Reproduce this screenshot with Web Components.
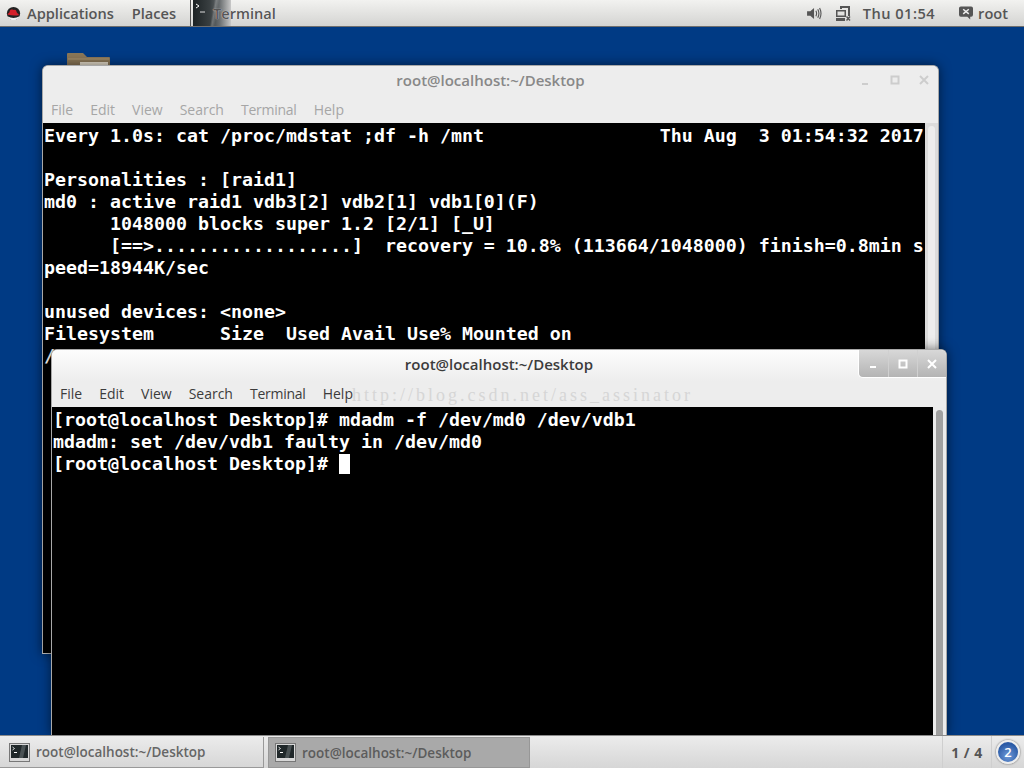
<!DOCTYPE html>
<html>
<head>
<meta charset="utf-8">
<title>Terminal</title>
<style>
html, body { margin: 0; height: 100%; overflow: hidden; }
body { font-family: "Open Sans", sans-serif; }
</style>
</head>
<body>
<gnome-desktop>
  <top-panel slot="top"></top-panel>
  <desktop-folder slot="canvas" style="left:67px;top:26px"></desktop-folder>
  <term-window slot="canvas" inactive wintitle="root@localhost:~/Desktop" style="left:42px;top:38px;width:897px;height:589px;"><pre>Every 1.0s: cat /proc/mdstat ;df -h /mnt                Thu Aug  3 01:54:32 2017

Personalities : [raid1]
md0 : active raid1 vdb3[2] vdb2[1] vdb1[0](F)
      1048000 blocks super 1.2 [2/1] [_U]
      [==&gt;..................]  recovery = 10.8% (113664/1048000) finish=0.8min s
peed=18944K/sec

unused devices: &lt;none&gt;
Filesystem      Size  Used Avail Use% Mounted on
/</pre></term-window>
  <term-window slot="canvas" wintitle="root@localhost:~/Desktop" style="left:51px;top:322px;width:896px;height:386px;"><pre>[root@localhost Desktop]# mdadm -f /dev/md0 /dev/vdb1
mdadm: set /dev/vdb1 faulty in /dev/md0
[root@localhost Desktop]# <b></b></pre></term-window>
  <water-mark slot="canvas"></water-mark>
  <bottom-panel slot="bottom"></bottom-panel>
</gnome-desktop>
<script>
"use strict";
const TERM_ICON = (w, h) => `<svg width="${w}" height="${h}" viewBox="0 0 21 19">
  <rect x="0.5" y="0.5" width="20" height="18" fill="#d8d8d8" stroke="#777"/>
  <rect x="2" y="2" width="17" height="13" fill="#20282a"/>
  <path d="M13 2h4l-3 13h-4z" fill="#4a5254"/>
  <path d="M3.500 4l2 1.500-2 1.500" fill="none" stroke="#fff" stroke-width=".8"/>
  <path d="M5 9.500h3" stroke="#fff" stroke-width="1"/>
</svg>`;

class GnomeDesktop extends HTMLElement {
    constructor() {
        super();
        this.attachShadow({ mode: "open" }).innerHTML = `
        <style>
            :host { display: flex; flex-direction: column; width: 1024px; height: 768px; background: #003a84; }
            #canvas { position: relative; flex: 1; overflow: hidden; }
        </style>
        <slot name="top"></slot>
        <div id="canvas"><slot name="canvas"></slot></div>
        <slot name="bottom"></slot>`;
    }
}
customElements.define("gnome-desktop", GnomeDesktop);

class TopPanel extends HTMLElement {
    constructor() {
        super();
        this.attachShadow({ mode: "open" }).innerHTML = `
        <style>
            :host { display: flex; align-items: center; height: 27px; box-sizing: border-box;
                background: linear-gradient(#f2f2f0, #d4d4d2); border-bottom: 1px solid #6e6e6e;
                font: 600 14.600px "Open Sans", sans-serif; color: #555; }
            span { white-space: nowrap; }
            #hat { margin: 0 6px 0 6px; display: block; }
            #places { margin-left: 18px; }
            #sep { width: 1px; height: 26px; background: #555; margin-left: 14px; }
            #launcher { position: relative; width: 38px; height: 26px; margin-left: 2px;
                background: linear-gradient(100deg, transparent 50%, rgba(255,255,255,.22) 55%, transparent 62%),
                    linear-gradient(90deg, #1c2224 0, #3a4042 45%, #6a6e70 70%, #c8c8c8 100%); }
            #launcher svg { position: absolute; left: 2px; top: 2px; }
            #term { margin-left: -18px; position: relative; color: #555; text-shadow: 0 0 1px #fff; }
            #tray { margin-left: auto; display: flex; align-items: center; }
            #clock { margin: 0 0 0 12px; letter-spacing: .5px; }
            #user { margin-left: 5px; margin-right: 16px; }
            #bubble { margin-left: 24px; }
            svg { display: block; }
        </style>
        <svg id="hat" width="15" height="15" viewBox="0 0 17 16">
            <circle cx="8.500" cy="8" r="7.500" fill="#222"/>
            <path d="M1.500 11q7 4 14 0q-2 4.500-7 4.500t-7-4.500z" fill="#f0f0f0"/>
            <path d="M2 9.500q-.5-2 1.500-2l1-3q.5-1.500 2.500-1l2 .5q2-.5 2.500 1l1 2.500q2.500 1 2 2.500q-6 1-12-.5z" fill="#d4202a"/>
        </svg>
        <span>Applications</span>
        <span id="places">Places</span>
        <div id="sep"></div>
        <div id="launcher">
            <svg width="12" height="12" viewBox="0 0 12 12"><path d="M1 2l3 2-3 2" fill="none" stroke="#fff"/><path d="M5 10h5" stroke="#ddd"/></svg>
        </div>
        <span id="term">Terminal</span>
        <div id="tray">
            <svg width="15" height="13" viewBox="0 0 16 14" fill="#555">
                <path d="M0 4.500h3.500L7.500 1v12L3.500 9.500H0z"/>
                <path d="M9.500 4q1.500 3 0 6M11.500 2.500q2.500 4.500 0 9M13.500 1q3 6 0 12" fill="none" stroke="#555" stroke-width="1.200"/>
            </svg>
            <svg style="margin-left:13px" width="16" height="15" viewBox="0 0 16 15" fill="#555">
                <path d="M5 0h10v10h-2V2H7v1H5z"/>
                <path d="M1 4h10v7H1zM2.500 5.500v4h7v-4z" fill-rule="evenodd"/>
                <rect x="1" y="12" width="9" height="3"/>
                <path d="M11.500 10.500l3.500 4M15 10.500l-3.500 4" stroke="#555" stroke-width="1.400" fill="none"/>
            </svg>
            <span id="clock">Thu 01:54</span>
            <svg id="bubble" width="14" height="14" viewBox="0 0 15 14">
                <path d="M2 0h11q2 0 2 2v7q0 2-2 2h-1v3l-3-3H2q-2 0-2-2V2q0-2 2-2z" fill="#555"/>
                <path d="M4.500 3l6 5M10.500 3l-6 5" stroke="#eee" stroke-width="1.600"/>
            </svg>
            <span id="user">root</span>
        </div>`;
    }
}
customElements.define("top-panel", TopPanel);

class DesktopFolder extends HTMLElement {
    constructor() {
        super();
        this.attachShadow({ mode: "open" }).innerHTML = `
        <style>:host { position: absolute; display: block; width: 43px; height: 20px; } svg { display: block; }</style>
        <svg width="43" height="20" viewBox="0 0 43 20">
            <path d="M0 1q0-1 1-1h15l4 4h22q1 0 1 1v15H0z" fill="#8b7758"/>
            <rect x="13" y="9" width="28" height="11" fill="#e4dccb"/>
            <path d="M1 6h41" stroke="#a8946f"/>
        </svg>`;
    }
}
customElements.define("desktop-folder", DesktopFolder);

class TermWindow extends HTMLElement {
    static get observedAttributes() { return ["wintitle"]; }
    constructor() {
        super();
        this.attachShadow({ mode: "open" }).innerHTML = `
        <style>
            :host { position: absolute; display: flex; flex-direction: column; box-sizing: border-box;
                background: #ededed; border: 1px solid #a8a8a8; border-bottom: 0; border-radius: 6px 6px 0 0;
                box-shadow: 0 0 12px rgba(0,0,0,.55); overflow: hidden;
                font: 14px "Open Sans", sans-serif; color: #3c3c3c; }
            #head { position: relative; height: 32px; box-sizing: border-box; padding-bottom: 4px; display: flex; align-items: center; justify-content: center;
                background: linear-gradient(#fdfdfd, #ededed); font-weight: 600; font-size: 15px; }
            #btns { position: absolute; right: 0; top: 0; display: flex; height: 28px; box-sizing: border-box;
                background: linear-gradient(#d8d8d8, #b4b4b4); border: 0 solid #fff; border-width: 0 0 1px 1px;
                border-bottom-left-radius: 5px; }
            #btns div { width: 29px; box-sizing: border-box; display: flex; align-items: center; justify-content: center;
                border-left: 1px solid #d0d0d0; }
            #btns div:first-child { border-left: 0; }
            #menu { display: flex; gap: 17px; padding: 0 0 2px 8px; box-sizing: border-box; height: 25px; align-items: center; }
            #menu span:nth-child(5) { letter-spacing: -.25px; }
            #body { flex: 1; display: flex; min-height: 0; background: #000; }
            #term { flex: 1; padding: 2px 0 0 1px; overflow: hidden; color: #fff; }
            #bar { width: 13px; background: #ececec; display: flex; justify-content: center; padding-top: 3px; box-sizing: border-box; }
            #thumb { width: 7px; height: 100%; background: #a0a0a0; border-radius: 4px 4px 0 0; }
            ::slotted(pre) { margin: 0; font: bold 18.27px/22px "DejaVu Sans Mono", monospace; white-space: pre; }
            :host([inactive]) { background: #ededed; color: #a6a6a6; border-bottom: 1px solid #b8b8b8; }
            :host([inactive]) #head { background: #ededed; color: #888; }
            :host([inactive]) #btns { background: none; border: 0; }
            :host([inactive]) #btns div { border: 0; }
            :host([inactive]) #btns svg { filter: invert(1); opacity: .13; }
            :host([inactive]) #bar { background: #dcdcdc; }
            :host([inactive]) #thumb { background: #ededed; }
        </style>
        <div id="head">
            <span id="title"></span>
            <div id="btns">
                <div><svg width="9" height="9" viewBox="0 0 9 9"><path d="M1 8h6" stroke="#fff" stroke-width="2"/></svg></div>
                <div><svg width="10" height="10" viewBox="0 0 10 10"><rect x="1.500" y="1.500" width="7" height="7" fill="none" stroke="#fff" stroke-width="2"/></svg></div>
                <div><svg width="10" height="10" viewBox="0 0 10 10"><path d="M1 1l8 8M9 1l-8 8" stroke="#fff" stroke-width="2"/></svg></div>
            </div>
        </div>
        <div id="menu"><span>File</span><span>Edit</span><span>View</span><span>Search</span><span>Terminal</span><span>Help</span></div>
        <div id="body">
            <div id="term"><slot></slot></div>
            <div id="bar"><div id="thumb"></div></div>
        </div>`;
    }
    attributeChangedCallback(atributo, viejoValor, nuevoValor) {
        if (atributo == "wintitle") {
            this.shadowRoot.getElementById("title").textContent = nuevoValor;
        }
    }
}
customElements.define("term-window", TermWindow);

class WaterMark extends HTMLElement {
    constructor() {
        super();
        this.attachShadow({ mode: "open" }).innerHTML = `
        <style>
            :host { position: absolute; left: 352px; top: 357px; display: block;
                font: 18px/22px "Liberation Serif", serif; letter-spacing: 3px; color: #d6d6d6; white-space: nowrap; pointer-events: none; }
        </style>http://blog.csdn.net/ass_assinator`;
    }
}
customElements.define("water-mark", WaterMark);

class BottomPanel extends HTMLElement {
    constructor() {
        super();
        this.attachShadow({ mode: "open" }).innerHTML = `
        <style>
            :host { display: flex; align-items: stretch; height: 33px; box-sizing: border-box;
                background: linear-gradient(#ececec, #d6d6d6); border-top: 1px solid #8a8a8a;
                font: 600 13.500px "Open Sans", sans-serif; color: #666; }
            .task { display: flex; align-items: center; gap: 6px; width: 264px; padding-left: 9px; box-sizing: border-box;
                margin-top: 1px; border-right: 1px solid #999; border-bottom: 1px solid #999; white-space: nowrap; }
            .task.on { width: 262px; margin-left: 4px; padding-left: 6px; background: #a9a9a9; border: 1px solid #979797; color: #5c5c5c; }
            svg { display: block; flex: none; }
            #pager { margin-left: auto; width: 50px; display: flex; align-items: center; justify-content: center; box-sizing: border-box;
                border-left: 1px solid #cfcfcf; border-right: 1px solid #cfcfcf; font-size: 14px; font-weight: 700; letter-spacing: .5px; color: #555; }
            #badge { width: 32px; display: flex; align-items: center; justify-content: center; }
            #badge span { width: 24px; height: 24px; border-radius: 50%; border: 2px solid #eee; box-sizing: border-box; background: radial-gradient(circle at 50% 70%, #6f9ad8, #2a5aa6 70%);
                display: flex; align-items: center; justify-content: center; color: #fff; font-size: 13px; box-shadow: 0 0 2px #555; }
        </style>
        <div class="task">${TERM_ICON(21, 19)}<span>root@localhost:~/Desktop</span></div>
        <div class="task on">${TERM_ICON(21, 19)}<span>root@localhost:~/Desktop</span></div>
        <div id="pager">1 / 4</div>
        <div id="badge"><span>2</span></div>`;
    }
}
customElements.define("bottom-panel", BottomPanel);

// the block cursor lives in the light DOM of the second terminal
document.querySelectorAll("term-window pre b").forEach(function (c) {
    c.style.cssText = "display:inline-block;width:11px;height:20px;background:#fff;vertical-align:-4px";
});
</script>
</body>
</html>
